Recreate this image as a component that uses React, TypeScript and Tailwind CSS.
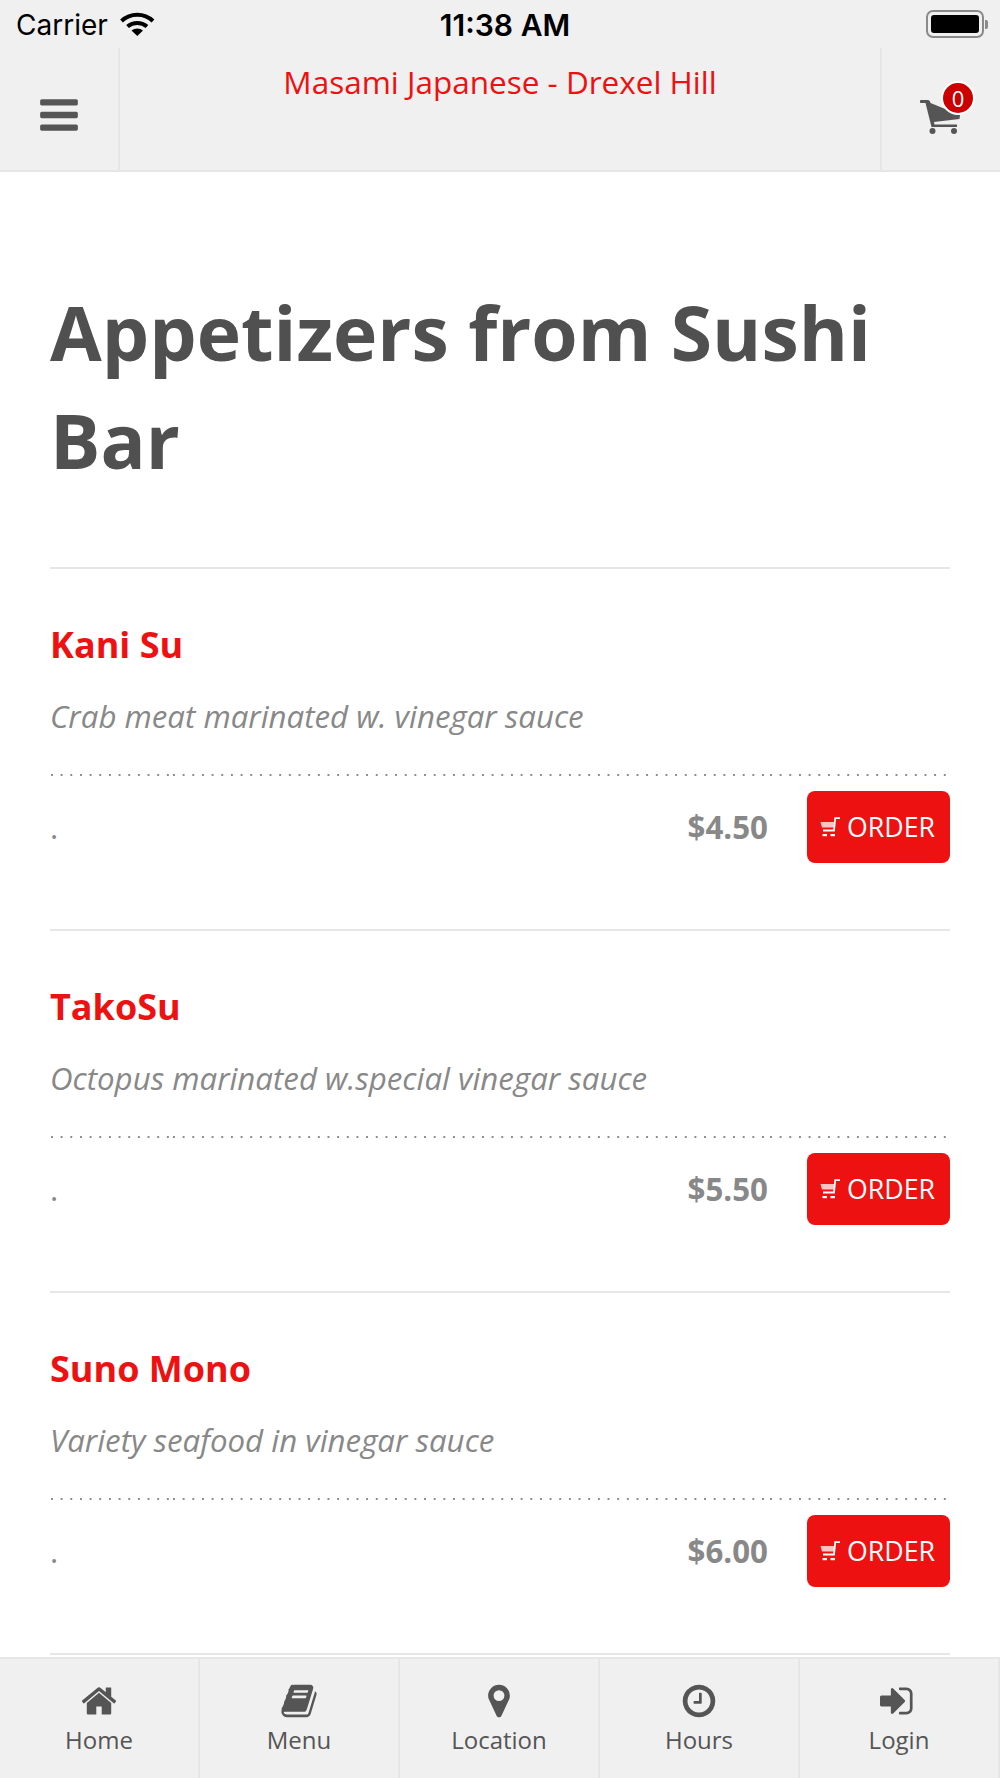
import React from "react";

const items = [
  { name: "Kani Su", desc: "Crab meat marinated w. vinegar sauce", price: "$4.50" },
  { name: "TakoSu", desc: "Octopus marinated w.special vinegar sauce", price: "$5.50" },
  { name: "Suno Mono", desc: "Variety seafood in vinegar sauce", price: "$6.00" },
];

const paths = {
  home: "M1472 992v480q0 26-19 45t-45 19h-384v-384h-256v384h-384q-26 0-45-19t-19-45v-480q0-1 .5-3t.5-3l575-474 575 474q1 2 1 6zm223-69l-62 74q-8 9-21 11h-3q-13 0-21-7l-692-577-692 577q-12 8-24 7-13-2-21-11l-62-74q-8-10-7-23.5t11-21.5l719-599q32-26 76-26t76 26l244 204v-195q0-14 9-23t23-9h192q14 0 23 9t9 23v408l219 182q10 8 11 21.5t-7 23.5z",
  book: "M1703 478q40 57 18 129l-275 906q-19 64-76.5 107.5t-122.5 43.5h-923q-77 0-148.5-53.5t-99.5-131.5q-24-67-2-127 0-4 3-27t4-37q1-8-3-21.5t-3-19.5q2-11 8-21t16.5-23.5 16.5-23.5q23-38 45-91.5t30-91.5q3-10 .5-30t-.5-28q3-11 17-28t17-23q21-36 42-92t25-90q1-9-2.5-32t.5-28q4-13 22-30.5t22-22.5q19-26 42.5-84.5t27.5-96.5q1-8-3-25.5t-2-26.5q2-8 9-18t18-23 17-21q8-12 16.5-30.5t15-35 16-36 19.5-32 26.5-23.5 36-11.5 47.5 5.5l-1 3q38-9 51-9h761q74 0 114 56t18 130l-274 906q-36 119-71.5 153.5t-128.5 34.5h-869q-27 0-38 15-11 16-1 43 24 70 144 70h923q29 0 56-15.5t35-41.5l300-987q7-22 5-57 38 15 59 43zm-1064 2q-4 13 2 22.5t20 9.5h608q13 0 25.5-9.5t16.5-22.5l21-64q4-13-2-22.5t-20-9.5h-608q-13 0-25.5 9.5t-16.5 22.5zm-83 256q-4 13 2 22.5t20 9.5h608q13 0 25.5-9.5t16.5-22.5l21-64q4-13-2-22.5t-20-9.5h-608q-13 0-25.5 9.5t-16.5 22.5z",
  marker: "M1152 640q0-106-75-181t-181-75-181 75-75 181 75 181 181 75 181-75 75-181zm256 0q0 109-33 179l-364 774q-16 33-47.5 52t-67.5 19-67.5-19-46.5-52l-365-774q-33-70-33-179 0-212 150-362t362-150 362 150 150 362z",
  clock: "M1024 544v448q0 14-9 23t-23 9h-320q-14 0-23-9t-9-23v-64q0-14 9-23t23-9h224v-352q0-14 9-23t23-9h64q14 0 23 9t9 23zm416 352q0-148-73-273t-198-198-273-73-273 73-198 198-73 273 73 273 198 198 273 73 273-73 198-198 73-273zm224 0q0 209-103 385.5t-279.5 279.5-385.5 103-385.5-103-279.5-279.5-103-385.5 103-385.5 279.5-279.5 385.5-103 385.5 103 279.5 279.5 103 385.5z",
  signin: "M1184 896q0 26-19 45l-544 544q-19 19-45 19t-45-19-19-45v-288h-448q-26 0-45-19t-19-45v-384q0-26 19-45t45-19h448v-288q0-26 19-45t45-19 45 19l544 544q19 19 19 45zm352-352v704q0 119-84.5 203.5t-203.5 84.5h-320q-13 0-22.5-9.5t-9.5-22.5q0-4-1-20t-.5-26.5 3-23.5 10-19.5 20.500-6.500h320q66 0 113-47t47-113v-704q0-66-47-113t-113-47h-288-11-13t-11.500-1-11.500-3-8-5.500-7-9-2-13.500q0-4-1-20t-.5-26.500 3-23.500 10-19.500 20.500-6.500h320q119 0 203.500 84.500t84.500 203.500z",
  bars: "M1664 1344v128q0 26-19 45t-45 19h-1408q-26 0-45-19t-19-45v-128q0-26 19-45t45-19h1408q26 0 45 19t19 45zm0-512v128q0 26-19 45t-45 19h-1408q-26 0-45-19t-19-45v-128q0-26 19-45t45-19h1408q26 0 45 19t19 45zm0-512v128q0 26-19 45t-45 19h-1408q-26 0-45-19t-19-45v-128q0-26 19-45t45-19h1408q26 0 45 19t19 45z",
};

const nav = [
  { label: "Home", d: paths.home },
  { label: "Menu", d: paths.book },
  { label: "Location", d: paths.marker },
  { label: "Hours", d: paths.clock },
  { label: "Login", d: paths.signin },
];

function Fa({ d, size }: { d: string; size: number }) {
  return (
    <svg width={size} height={size} viewBox="0 0 1792 1792" fill="currentColor">
      <path d={d} />
    </svg>
  );
}

function Wifi() {
  return (
    <svg width="35" height="25" viewBox="0 0 35 25" fill="none">
      <path d="M1.5 9 A23 23 0 0 1 33 9" stroke="#000" strokeWidth="4" />
      <path d="M7.5 14.5 A15 15 0 0 1 27 14.5" stroke="#000" strokeWidth="4" />
      <path d="M17.3 24 L11.5 18.5 A9 9 0 0 1 23 18.5 Z" fill="#000" />
    </svg>
  );
}

function Battery() {
  return (
    <div className="flex items-center">
      <div className="w-[58px] h-[28px] rounded-[7px] border-[2px] border-[#8a8a8a] p-[3px]">
        <div className="w-full h-full rounded-[3px] bg-black" />
      </div>
      <div className="w-[3px] h-[9px] ml-[1px] rounded-r-[2px] bg-[#8a8a8a]" />
    </div>
  );
}

function HeaderCart() {
  return (
    <svg width="41" height="35" viewBox="0 0 41 35" fill="#555555">
      <path d="M0.5 0 H8 Q9.5 0 10 1.5 L10.5 3 L40 15 L39.5 19 L14 22 L14.5 24.5 H37 V27 H11.5 L5.5 3 H0.5 Q0 3 0 1.5 Q0 0 0.5 0 Z" />
      <circle cx="12.5" cy="31" r="3" />
      <circle cx="34" cy="31" r="3" />
    </svg>
  );
}

function OrderCart() {
  return (
    <svg width="20" height="20" viewBox="0 0 20 20" fill="none">
      <path d="M20 1.2 H15.2 L14 13.5 H3" stroke="#fff" strokeWidth="1.8" />
      <path d="M0.5 5 H14.5 L14 10.5 H2 Z" fill="#fff" fillOpacity="0.75" />
      <rect x="2.5" y="17" width="4.5" height="2.2" fill="#fff" />
      <rect x="10.5" y="17" width="4.5" height="2.2" fill="#fff" />
    </svg>
  );
}

function DotRun({ className }: { className: string }) {
  return (
    <div
      className={
        "h-[2px] bg-[linear-gradient(to_right,#8c8c8c_2px,transparent_2px)] bg-[length:9.667px_2px] bg-repeat-x " +
        className
      }
    />
  );
}

function Item({ name, desc, price }: { name: string; desc: string; price: string }) {
  return (
    <div className="h-[362px] border-t-2 border-[#e6e6e6]">
      <div className="pt-[51px] text-[36px] leading-[50px] font-bold text-[#ee1111]">{name}</div>
      <div className="mt-[24px] text-[31.25px] leading-[44px] italic text-[#888888]">{desc}</div>
      <div className="mt-[36px] flex h-[2px]">
        <DotRun className="ml-[1px] w-[118px]" />
        <DotRun className="ml-[4px] w-[598px]" />
        <DotRun className="ml-[-1px] w-[176px]" />
      </div>
      <div className="mt-[15px] flex items-center h-[72px]">
        <span className="flex-1 text-[31.25px] leading-[44px] text-[#888888] pb-[1px]">.</span>
        <span className="text-[31.25px] font-bold text-[#888888] mr-[39px]">{price}</span>
        <div className="w-[143px] h-[72px] rounded-[8px] bg-[#ee1111] flex items-center justify-center gap-[7px] pr-[2px] text-white text-[26.7px]">
          <OrderCart />
          <span>ORDER</span>
        </div>
      </div>
    </div>
  );
}

export default function App() {
  return (
    <div className="w-[1000px] h-[1778px] flex flex-col overflow-hidden bg-white font-['Open_Sans',sans-serif]">
      <div className="h-[48px] shrink-0 bg-[#f0f0f0] flex items-center justify-between pl-[16px] pr-[12px] font-['Inter',sans-serif] text-black">
        <div className="flex items-center gap-[12px] w-[300px]">
          <span className="text-[28px] leading-none pt-[2px]">Carrier</span>
          <Wifi />
        </div>
        <span className="text-[30px] leading-none font-semibold pt-[2px] ml-[6px]">11:38 AM</span>
        <div className="w-[300px] flex justify-end">
          <Battery />
        </div>
      </div>

      <div className="h-[124px] shrink-0 bg-[#f0f0f0] border-b-2 border-[#e6e6e6] flex">
        <div className="w-[120px] border-r-2 border-[#e6e6e6] flex items-center justify-center text-[#555555] pt-[12px]">
          <Fa d={paths.bars} size={44} />
        </div>
        <div className="flex-1 text-center text-[31.5px] leading-[44px] pt-[12px] text-[#ee1111]">
          Masami Japanese - Drexel Hill
        </div>
        <div className="w-[120px] border-l-2 border-[#e6e6e6] relative pl-[38px] pt-[52px]">
          <HeaderCart />
          <span className="absolute left-[59px] top-[33px] w-[34px] h-[34px] rounded-full bg-[#cc0000] border-2 border-white text-white text-[22px] leading-[30px] text-center">
            0
          </span>
        </div>
      </div>

      <div className="flex-1 min-h-0 overflow-hidden px-[50px]">
        <h1 className="mt-[106px] mb-[73px] text-[75px] leading-[108px] font-bold text-[#505050]">
          Appetizers from Sushi Bar
        </h1>
        {items.map((it) => (
          <Item key={it.name} {...it} />
        ))}
        <div className="border-t-2 border-[#e6e6e6]" />
      </div>

      <div className="h-[121px] shrink-0 bg-[#f0f0f0] border-t-2 border-[#e6e6e6] grid grid-cols-5">
        {nav.map(({ label, d }) => (
          <div key={label} className="border-r-2 border-[#e6e6e6] flex flex-col items-center pt-[23px] text-[#555555]">
            <Fa d={d} size={38} />
            <span className="text-[24px] leading-[36px] mt-[2px]">{label}</span>
          </div>
        ))}
      </div>
    </div>
  );
}
